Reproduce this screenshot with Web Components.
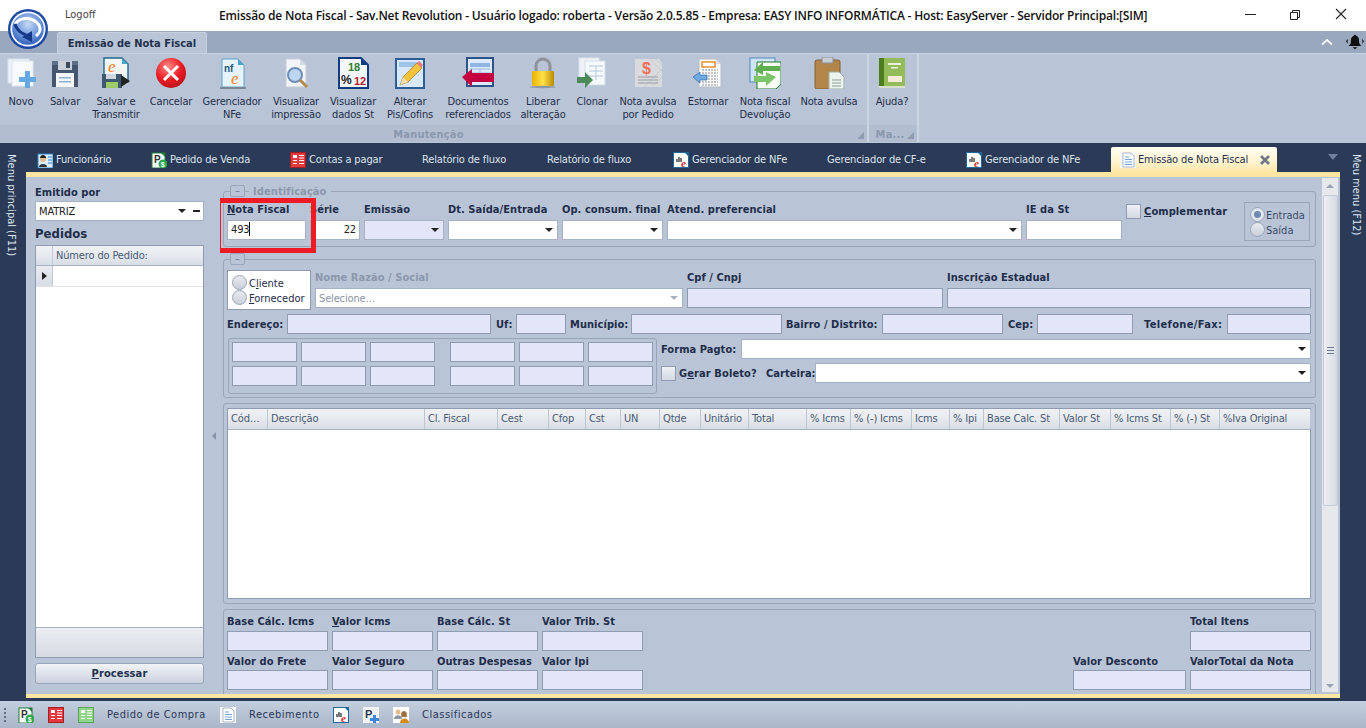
<!DOCTYPE html>
<html lang="pt"><head><meta charset="utf-8"><title>Sav.Net</title>
<style>
html,body{margin:0;padding:0;height:100%;overflow:hidden;background:#2a3a57}
body{font:11px "DejaVu Sans Condensed","DejaVu Sans",sans-serif;font-stretch:condensed;color:#1f2d4a;letter-spacing:-.15px}
</style></head><body>
<script>
const ICONS={
novo:`<rect x="3" y="2" width="21" height="24" fill="#eef2f8" stroke="#d5dde8"/><rect x="7" y="4" width="21" height="25" fill="#f8fafd" stroke="#dce4ee"/><path d="M20 14h5v6h6v5h-6v6h-5v-6h-6v-5h6z" fill="#63a9e4"/>`,
salvar:`<path d="M3 4h26v26H3z" fill="#46566f"/><path d="M3 4h26v4H3z" fill="#5e6e88"/><rect x="9" y="4" width="14" height="9" fill="#c9cfd8"/><rect x="17" y="5" width="4" height="6" fill="#3b4a60"/><rect x="7" y="16" width="18" height="14" fill="#f4f6fa"/><path d="M10 20h12v1.500H10zM10 24h12v1.500H10z" fill="#8fb2d6"/>`,
trans:`<path d="M4 1h18l6 6v18H4z" fill="#f4f6f6" stroke="#1e6a8a" stroke-width="1.400"/><path d="M22 1v6h6z" fill="#4aa6c8"/><text x="8" y="15" font-family="Liberation Serif,serif" font-style="italic" font-size="17" fill="#e8801e">e</text><rect x="2" y="17" width="20" height="14" fill="#3f5a70"/><rect x="6" y="17" width="10" height="5" fill="#cfd6de"/><rect x="6" y="25" width="12" height="6" fill="#9ecb6a"/><path d="M21 18l9 6-9 6z" fill="#222"/>`,
cancel:`<defs><radialGradient id="rd" cx=".4" cy=".3" r=".8"><stop offset="0" stop-color="#ff8a8a"/><stop offset=".55" stop-color="#ea1c24"/><stop offset="1" stop-color="#b01015"/></radialGradient></defs><circle cx="16" cy="16" r="15" fill="url(#rd)"/><path d="M9 9l14 14M23 9L9 23" stroke="#fff" stroke-width="3"/>`,
nfe:`<path d="M6 2h16l6 6v22H6z" fill="#e6f3fa" stroke="#5aa2c8"/><path d="M22 2v6h6z" fill="#4aa6c8"/><text x="8" y="15" font-family="Liberation Sans,sans-serif" font-weight="700" font-size="10" fill="#1d5a7a">nf</text><text x="15" y="27" font-family="Liberation Serif,serif" font-style="italic" font-size="17" fill="#ef8a1d">e</text><rect x="4" y="30" width="26" height="2" fill="#7d8792"/>`,
visual:`<path d="M6 2h14l6 6v22H6z" fill="#f2f4f8" stroke="#c5ccd8"/><path d="M20 2v6h6z" fill="#d5dbe5"/><circle cx="15" cy="18" r="7" fill="#bcd6f2" stroke="#6e8eb8" stroke-width="2"/><path d="M20 23l7 7" stroke="#b58a4a" stroke-width="3"/>`,
st:`<path d="M2 1h22l7 7v23H2z" fill="#f4f7fb" stroke="#123c80" stroke-width="2"/><path d="M24 1v7h7z" fill="#123c80"/><text x="11" y="14" font-family="Liberation Sans,sans-serif" font-weight="700" font-size="11" fill="#2f7d2f">18</text><text x="4" y="27" font-family="Liberation Sans,sans-serif" font-weight="700" font-size="12" fill="#222">%</text><text x="17" y="28" font-family="Liberation Sans,sans-serif" font-weight="700" font-size="11" fill="#b4242a">12</text>`,
alterar:`<rect x="2" y="2" width="28" height="29" fill="#d8e8f8" stroke="#2c5f96" stroke-width="2"/><rect x="5" y="5" width="22" height="5" fill="#9fc4ea"/><path d="M6 28l3-8L23 6l5 5-14 14z" fill="#f5c33c" stroke="#a9761c" stroke-width=".7"/><path d="M23 6l2-2 4 4-2 3z" fill="#e77"/><path d="M6 28l3-8 5 5z" fill="#f3dcae"/>`,
docs:`<rect x="5" y="1" width="26" height="28" fill="#dce9f8" stroke="#2c5288" stroke-width="2"/><rect x="8" y="6" width="20" height="4" fill="#8db4e2"/><path d="M8 12h20M8 16h20M8 20h20M18 12v10" stroke="#9ab8dc"/><path d="M0 20l10-8v4h22v9H10v5z" fill="#c4053f"/>`,
lock:`<path d="M9 15V9a7 7 0 0114 0v6" fill="none" stroke="#8f9299" stroke-width="3"/><defs><linearGradient id="gd" x1="0" x2="1"><stop offset="0" stop-color="#e7b400"/><stop offset=".5" stop-color="#ffe14a"/><stop offset="1" stop-color="#b98a00"/></linearGradient></defs><rect x="5" y="14" width="22" height="15" rx="1" fill="url(#gd)"/><ellipse cx="16" cy="30" rx="13" ry="1.200" fill="#8d97a6"/>`,
clone:`<rect x="3" y="1" width="20" height="23" fill="#eef2f7" stroke="#dbe2ec"/><rect x="9" y="4" width="20" height="24" fill="#f6f9fc" stroke="#d3dde9"/><path d="M13 9h14M13 14h14M13 19h14M20 9v14" stroke="#b6c7da"/><path d="M1 20h8v-5l8 8-8 8v-5H1z" fill="#4e8a57"/>`,
avulsa:`<path d="M3 2h24l3 4v24H3z" fill="#d8dade"/><path d="M18 2l12 12M24 2l6 6M12 30l18-18M20 30l10-10" stroke="#c9cbd0"/><text x="10" y="17" font-family="Liberation Sans,sans-serif" font-weight="700" font-size="16" fill="#f0705a">$</text><path d="M6 20h20M6 23h20M6 26h20" stroke="#9a9ca2"/>`,
estornar:`<path d="M7 2h17l5 5v23H7z" fill="#fafafa" stroke="#b8bdc6"/><path d="M24 2v5h5z" fill="#dde"/><rect x="10" y="5" width="13" height="5" fill="#fff" stroke="#e8892a" stroke-width="1.400"/><path d="M10 13h16M10 16h16M16 19h10M16 22h10M10 25h16M10 28h16" stroke="#8a8f98" stroke-dasharray="2 1"/><path d="M1 20l7-5v3h7v5H8v3z" fill="#6ea9e0" stroke="#2f6aa8" stroke-width=".7"/>`,
fiscal:`<rect x="1" y="1" width="25" height="24" fill="#cfe4f6" stroke="#4d8ac0"/><path d="M8 5h24v22l-5 5H8z" fill="#f6fbf4" stroke="#1f7d2d"/><path d="M5 13l9-8v4h17v5H14v4z" fill="#5fae50"/><path d="M27 20l-10 9v-4H5v-6h12v-4z" fill="#7cc56a"/>`,
clip:`<rect x="2" y="3" width="25" height="29" rx="2" fill="#b2854a" stroke="#856034"/><rect x="9" y="0" width="11" height="6" rx="1" fill="#c8ccd4" stroke="#8a8f98"/><path d="M16 15h10l5 5v12H16z" fill="#eef3ef" stroke="#9cb0a6"/><path d="M19 23h9M19 26h9M19 29h9" stroke="#8aa098"/>`,
help:`<rect x="3" y="1" width="26" height="28" rx="1" fill="#93bb5a"/><rect x="3" y="1" width="5" height="28" fill="#4e7d1d"/><rect x="12" y="6" width="13" height="2" fill="#e8f2d8"/><rect x="15" y="10" width="7" height="1.500" fill="#e8f2d8"/><rect x="12" y="19" width="14" height="6" fill="#f6ead8"/><rect x="3" y="29" width="26" height="2" fill="#d9dfcb"/>`,
func:`<rect x="1" y="2" width="15" height="14" fill="#dbeefb" stroke="#2c86c8"/><circle cx="6" cy="7" r="3" fill="#e7b98a"/><path d="M3 6c0-4 6-4 6 0z" fill="#222"/><path d="M2 15c0-4 8-4 8 0z" fill="#333"/><path d="M11 5h4M11 8h4M11 11h4" stroke="#2c86c8"/>`,
pv:`<rect x="1" y="1" width="13" height="15" fill="#fff" stroke="#1d7d36"/><path d="M10 1h4v4z" fill="#1d7d36"/><text x="3" y="11" font-family="Liberation Sans,sans-serif" font-weight="700" font-size="10" fill="#333">P</text><circle cx="12" cy="12" r="4.500" fill="#2aa84a"/><text x="9.800" y="15" font-family="Liberation Sans,sans-serif" font-weight="700" font-size="7" fill="#fff">$</text>`,
red:`<rect x=".5" y=".5" width="15" height="15" fill="#e23a3e" stroke="#a71d22"/><path d="M3 3h4v3H3zM3 8h4v1H3zM3 11h4v1H3z" fill="#fff"/><path d="M9 3.500h5M9 6h5M9 8.500h5M9 11.500h5" stroke="#fff"/>`,
green:`<rect x=".5" y=".5" width="15" height="15" fill="#90d68a" stroke="#5aa655"/><path d="M3 3h4v3H3zM3 8h4v1H3zM3 11h4v1H3z" fill="#fff"/><path d="M9 3.500h5M9 6h5M9 8.500h5M9 11.500h5" stroke="#fff"/>`,
sheet:`<rect x="0" y="0" width="16" height="16" fill="#f6f7f8"/><path d="M3 1h8l3 3v11H3z" fill="#fff" stroke="#aeb6c2"/><path d="M5 5h4M5 7.500h7M5 10h7M5 12.500h7" stroke="#6aa4d8"/>`,
nfs:`<rect x=".5" y=".5" width="15" height="15" fill="#fff" stroke="#1d6a9a"/><path d="M11 0h5v5z" fill="#1d6a9a"/><path d="M4 10V7M6 10V5M8 10V6" stroke="#333" stroke-width="1.300"/><text x="8" y="15" font-family="Liberation Serif,serif" font-style="italic" font-weight="700" font-size="11" fill="#d8281e">e</text>`,
pplus:`<rect x="0" y="0" width="16" height="16" fill="#f1f2f4"/><text x="2" y="11" font-family="Liberation Sans,sans-serif" font-weight="700" font-size="11" fill="#2a3a57">P</text><path d="M10 8h3v3h3v3h-3v2h-3v-2H7v-3h3z" fill="#3f86d8"/>`,
class:`<rect x="0" y="0" width="16" height="16" fill="#fff"/><circle cx="5" cy="5" r="2.500" fill="#e9b98a"/><path d="M1 12c0-5 8-5 8 0z" fill="#8b95a5"/><circle cx="11" cy="7" r="2.600" fill="#efc18f"/><path d="M8.200 7c0-4 5.600-4 5.600 0v3H8.200z" fill="#7a4b1e" opacity=".7"/><path d="M7 16c0-6 9-6 9 0z" fill="#d58b1e"/>`
};
const def=(n,html)=>{customElements.define(n,class extends HTMLElement{
 connectedCallback(){ if(this.shadowRoot) return; const r=this.attachShadow({mode:'open'}); r.innerHTML=typeof html==='function'?html(this):html; }
})};
def('x-icon',e=>{const s=e.getAttribute('size')||32,vb=e.getAttribute('vb')||s;return `<style>:host{display:block;width:${s}px;height:${s}px;flex:none}svg{display:block}</style><svg width="${s}" height="${s}" viewBox="0 0 ${vb} ${vb}">${ICONS[e.getAttribute('name')]||''}</svg>`});

def('x-logo',`<style>:host{position:absolute;left:8px;top:9px;width:40px;height:40px;z-index:3}</style>
<svg width="40" height="40" viewBox="0 0 40 40"><defs><radialGradient id="b" cx=".5" cy=".35" r=".7"><stop offset="0" stop-color="#c6daf6"/><stop offset=".55" stop-color="#6d96da"/><stop offset="1" stop-color="#2a58b4"/></radialGradient></defs><circle cx="20" cy="20" r="20" fill="#1d4aa0"/><circle cx="20" cy="20" r="17.600" fill="#eef4fc"/><circle cx="20" cy="20" r="15.800" fill="url(#b)"/><path d="M7 15c6-8 18-7 24 1 2 4 1 8-3 11" fill="none" stroke="#fff" stroke-width="3"/><path d="M7 15c2 7 9 12 17 12" fill="none" stroke="#17398a" stroke-width="3"/><path d="M14 28l10 5 0-11z" fill="#17398a"/></svg>`);

def('x-titlebar',`<style>:host{display:flex;align-items:center;height:31px;background:#fff;flex:none;position:relative;letter-spacing:0}
.log{position:absolute;left:65px;top:8px;font:11px "DejaVu Sans Condensed","DejaVu Sans",sans-serif;font-stretch:condensed;color:#444}
.t{margin-left:219px;font:600 12px "Open Sans",sans-serif;color:#111;white-space:nowrap;letter-spacing:-.187px;width:950px}
.w{margin-left:auto;display:flex}.w svg{display:block}
</style><span class="log">Logoff</span><span class="t">Emissão de Nota Fiscal - Sav.Net Revolution - Usuário logado: roberta - Versão 2.0.5.85 - Empresa: EASY INFO INFORMÁTICA - Host: EasyServer - Servidor Principal:[SIM]</span>
<div class="w"><svg width="136" height="31" viewBox="0 0 136 31" fill="none" stroke="#222"><path d="M15 14.500h11"/><path d="M60.500 12.500h7v7h-7zM62.500 12.500v-2h7v7h-2"/><path d="M106 9l10 10M116 9l-10 10" stroke-width="1.100"/></svg></div>`);

def('x-ribbon-tabs',`<style>:host{display:flex;height:22px;background:#9aa8bf;flex:none;position:relative}
.tab{margin:1px 0 0 57px;width:150px;height:21px;box-sizing:border-box;background:#b9c5d6;border:1px solid #c6d0de;border-bottom:0;border-radius:3px 3px 0 0;font-weight:700;font-size:11px;letter-spacing:0;line-height:21px;text-align:center;color:#23314e}
.r{margin-left:auto;display:flex;align-items:center;gap:13px;padding-right:2px}
</style><div class="tab">Emissão de Nota Fiscal</div>
<div class="r"><svg width="12" height="8" viewBox="0 0 12 8"><path d="M1 6.500l5-4.500 5 4.500" fill="none" stroke="#f4f6f9" stroke-width="2"/></svg>
<svg width="18" height="18" viewBox="0 0 22 18"><path d="M11 0c1 0 1.500.8 1.500 1.500C16 3 16 6 16 9c0 2 1.500 3.500 3 5H3c1.500-1.500 3-3 3-5 0-3 0-6 3.500-7.500C9.500.8 10 0 11 0z" fill="#111"/><path d="M8 15.500h6l-3 2.500zM2 5l-2 3 2 3M20 5l2 3-2 3" fill="#111"/></svg></div>`);

def('x-ribbon',`<style>:host{display:flex;height:90px;background:#b9c5d6;flex:none;border-top:1px solid #c8d2e0;box-sizing:border-box}
</style><slot></slot>`);
def('x-ribbon-group',e=>`<style>:host{display:flex;flex-direction:column;flex:none;width:${e.getAttribute('w')}px;height:88px;border-right:2px solid #cbd4e1;box-sizing:border-box}
.b{display:flex;height:71px}.l{height:17px;box-sizing:border-box;padding-right:${e.getAttribute('lp')||0}px;background:#b2bed0;color:#8b97ac;font-weight:700;font-size:11px;line-height:20px;text-align:center;position:relative;letter-spacing:.2px}
.l i{position:absolute;right:3px;bottom:3px;width:0;height:0;border-left:7px solid transparent;border-bottom:7px solid #8e9bb0}
</style><div class="b"><slot></slot></div><div class="l">${e.getAttribute('label')}<i></i></div>`);
def('x-ribbon-btn',e=>`<style>:host{display:flex;flex-direction:column;align-items:center;flex:none;width:${e.getAttribute('w')}px;padding-top:3px;box-sizing:border-box}
.t{margin-top:6px;text-align:center;line-height:13px;color:#1f2d4a;white-space:pre-line}
</style><x-icon name="${e.getAttribute('icon')}" size="32"></x-icon><div class="t"><slot></slot></div>`);

def('x-rail',e=>`<style>:host{display:flex;flex:none;width:26px;justify-content:center;padding:11px ${e.getAttribute('pr')||0}px 0 ${e.getAttribute('pl')||0}px;box-sizing:border-box;background:#2a3a57}
span{writing-mode:vertical-rl;color:#dfe5ef;font-size:11px;white-space:nowrap;letter-spacing:0}</style><span><slot></slot></span>`);

def('x-tabstrip',`<style>:host{display:flex;height:29px;box-sizing:border-box;padding:4px 0 0 11px;background:#2a3a57;gap:40px;position:relative;flex:none}
i{position:absolute;right:2px;top:11px;width:0;height:0;border:5px solid transparent;border-top:6px solid #71809a;border-bottom:0}</style><slot></slot><i></i>`);
def('x-tab',e=>{const ic=e.getAttribute('icon');return `<style>:host{display:flex;align-items:center;gap:3px;flex:none;height:25px;width:${e.getAttribute('w')}px;color:#dde3ed;white-space:nowrap}</style>${ic?`<x-icon name="${ic}" size="16" vb="16"></x-icon>`:''}<slot></slot>`});
def('x-tab-active',`<style>:host{display:flex;align-items:center;flex:none;width:166px;height:25px;margin:0 0 0 -9px;box-sizing:border-box;padding:0 6px 0 9px;gap:2px;background:linear-gradient(#fffdf4,#fff3cf 60%,#ffe6a4);border-radius:2px 2px 0 0;color:#23314e;white-space:nowrap}
svg{margin-left:auto}</style><x-icon name="sheet" size="16" vb="16"></x-icon><slot></slot><svg width="12" height="12" viewBox="0 0 12 12"><path d="M2 2l8 8M10 2l-8 8" stroke="#6e7888" stroke-width="2.600"/></svg>`);

def('x-panel',`<style>:host{display:flex;flex:1;min-height:0;background:#b9c5d6;border-top:5px solid #ffe5a2;border-bottom:4px solid #ffe5a2}</style><slot></slot>`);
def('x-side',`<style>:host{display:flex;flex-direction:column;flex:none;width:169px;margin-left:9px;padding-top:9px;box-sizing:border-box}
.e{font-weight:700;height:15px;line-height:14px;letter-spacing:.05px}
.h{font-weight:700;font-size:13px;height:24px;line-height:26px;margin-top:0;flex:none;letter-spacing:0}
</style><div class="e">Emitido por</div><x-combo w="169" h="20" white minus>MATRIZ</x-combo><div class="h">Pedidos</div><slot></slot>`);
def('x-pedidos',`<style>:host{display:flex;flex-direction:column;width:169px;height:413px;box-sizing:border-box;border:1px solid #8f9bb0;background:#fff;flex:none}
.hd{display:flex;box-sizing:border-box;height:20px;background:linear-gradient(#eff1f4,#e6e9ee 50%,#d8dde6);border-bottom:1px solid #a7b2c4;color:#4a5a75;line-height:19px}
.c{width:16px;border-right:1px solid #c2cad6}.n{padding-left:3px}
.row{display:flex;box-sizing:border-box;height:21px;border-bottom:1px solid #dfe3e9}
.ri{width:16px;background:linear-gradient(#e8ebef,#d8dde6);border-right:1px solid #c2cad6;position:relative}
.ri i{position:absolute;left:6px;top:6px;border:4px solid transparent;border-left:5px solid #222;border-right:0}
.sp{flex:1}.ft{height:30px;box-sizing:border-box;border-top:1px solid #a7b2c4;background:linear-gradient(#eceef2,#e0e3ea 50%,#d6dae3)}
</style><div class="hd"><div class="c"></div><div class="n">Número do Pedido:</div></div><div class="row"><div class="ri"><i></i></div></div><div class="sp"></div><div class="ft"></div>`);
def('x-button',`<style>:host{display:block;flex:none;width:169px;height:21px;margin-top:5px;box-sizing:border-box;border:1px solid #98a5ba;border-radius:3px;background:linear-gradient(#f1f3f6,#dde1e9 50%,#cbd2de);text-align:center;font-weight:700;line-height:19px;color:#23314e;letter-spacing:.1px}</style><slot></slot>`);
def('x-splitter',`<style>:host{display:flex;flex:none;width:16px;align-items:center;justify-content:center;padding-left:4px;box-sizing:border-box}i{width:0;height:0;border:4px solid transparent;border-right:4px solid #8793a8;border-left:0}</style><i></i>`);

def('x-main',`<style>:host{display:block;flex:none;width:1100px;overflow:hidden;box-sizing:border-box;padding:14px 0 0 3px;position:relative}</style><slot></slot>`);
def('x-group',e=>{const leg=e.getAttribute('legend');const col=e.hasAttribute('collapsible');return `<style>:host{display:block;position:relative;width:1093px;box-sizing:border-box;border:1px solid #98a5ba;border-radius:3px;padding:0 3px;height:${e.getAttribute('h')}px;margin-top:${e.getAttribute('mt')||0}px}
.b{position:absolute;left:6px;top:-7px;width:15px;height:12px;border:1px solid #98a5ba;border-radius:2px;background:#b9c5d6;box-sizing:border-box;color:#6c7a92;line-height:9px;text-align:center;font-size:11px}
.l{position:absolute;left:25px;top:-7px;background:#b9c5d6;padding:0 4px;font-weight:700;color:#8b97ac;line-height:13px;letter-spacing:.1px}</style>${col?'<div class="b">–</div>':''}${leg?`<div class="l">${leg}</div>`:''}<slot></slot>`});
def('x-row',e=>`<style>:host{display:flex;gap:${e.getAttribute('gap')??4}px;align-items:${e.getAttribute('ai')||'flex-start'};margin-top:${e.getAttribute('mt')||0}px;padding-right:${e.getAttribute('pr')||0}px}</style><slot></slot>`);

const BOX=`box-sizing:border-box;border:1px solid #8f9bb0;`;
def('x-input',e=>`<style>:host{display:block;flex:none;${BOX}width:${e.getAttribute('w')}px;height:${e.getAttribute('h')||20}px;background:${e.hasAttribute('white')?'#fff':'#e3e5f8'};line-height:18px;padding:0 3px;color:#222;text-align:${e.getAttribute('ta')||'left'};font-size:11px;border-color:${e.hasAttribute('white')?'#a5b1c4':'#8f9bb0'}}
b{display:inline-block;width:1px;height:14px;background:#111;vertical-align:-3px}</style><slot></slot>${e.hasAttribute('caret')?'<b></b>':''}`);
def('x-combo',e=>{const mute=e.hasAttribute('muted');return `<style>:host{display:flex;align-items:center;flex:none;${BOX}width:${e.getAttribute('w')}px;height:${e.getAttribute('h')||20}px;background:${e.hasAttribute('white')?'#fff':'#e3e5f8'};padding:0 3px;color:${mute?'#8a94a6':'#222'};border-color:#a5b1c4}
.a{margin-left:auto;width:0;height:0;border:4px solid transparent;border-top:4px solid ${mute?'#aab3c2':'#222'};border-bottom:0;margin-right:1px}
.m{width:7px;height:2px;background:#222;margin-left:6px}</style><slot></slot><i class="a"></i>${e.hasAttribute('minus')?'<i class="m"></i>':''}`});
def('x-field',e=>`<style>:host{display:block;flex:none;width:${e.getAttribute('w')}px}
.l{height:18px;line-height:${e.getAttribute('ll')||16}px;font-weight:700;white-space:nowrap;color:${e.hasAttribute('muted')?'#8b97ac':'#1f2d4a'};letter-spacing:.05px}</style><div class="l"><slot></slot></div>${
 e.getAttribute('kind')==='combo'?`<x-combo w="${e.getAttribute('w')}" ${e.hasAttribute('white')?'white':''} ${e.hasAttribute('muted')?'muted':''}>${e.getAttribute('value')||''}</x-combo>`:
 `<x-input w="${e.getAttribute('w')}" ${e.hasAttribute('white')?'white':''} ${e.hasAttribute('caret')?'caret':''} ta="${e.getAttribute('ta')||'left'}">${e.getAttribute('value')||''}</x-input>`}`);
def('x-inline',e=>`<style>:host{display:flex;align-items:center;flex:none;margin-left:${e.getAttribute('ml')||0}px}
.l{width:${e.getAttribute('lw')}px;font-weight:700;white-space:nowrap;letter-spacing:${e.getAttribute('ls')||'.05'}px}</style><div class="l"><slot></slot></div><x-input w="${e.getAttribute('w')}"></x-input>`);
def('x-check',`<style>:host{display:flex;align-items:center;gap:3px;flex:none;font-weight:700;white-space:nowrap;letter-spacing:.1px}
i{width:15px;height:15px;box-sizing:border-box;border:1px solid #8f9bb0;background:linear-gradient(#eef0f4,#d3d8e2)}</style><i></i><span><slot></slot></span>`);
def('x-radio',e=>`<style>:host{display:flex;align-items:center;gap:${e.getAttribute('gap')||1}px;height:15px;flex:none;white-space:nowrap;letter-spacing:0;color:${e.getAttribute('color')||'#1f2d4a'}}
span{padding-top:2px}
i{width:15px;height:15px;border-radius:50%;box-sizing:border-box;border:1px solid #98a5ba;background:${e.hasAttribute('on')?'radial-gradient(#7189ae 0 3px,#dfe3ea 4px)':'linear-gradient(#e8ebef,#c9cfda)'}}</style><i></i><span><slot></slot></span>`);
def('x-radio-box',e=>`<style>:host{display:flex;flex-direction:column;justify-content:center;flex:none;box-sizing:border-box;width:${e.getAttribute('w')}px;height:${e.getAttribute('h')}px;padding-left:${e.getAttribute('pl')||4}px;${e.hasAttribute('white')?'background:#fff;border:1px solid #8f9bb0;':'border:1px solid #98a5ba;'}}</style><slot></slot>`);
def('x-subbox',`<style>:host{display:grid;grid-template-columns:repeat(6,65px);align-content:start;column-gap:4px;row-gap:4px;flex:none;width:429px;height:56px;margin-left:1px;box-sizing:border-box;border:1px solid #98a5ba;border-radius:3px;padding:3px 3px 0 3px}</style><slot></slot>`);
def('x-datagrid',e=>{const cols=[['Cód…',41],['Descrição',157],['Cl. Fiscal',73],['Cest',51],['Cfop',37],['Cst',35],['UN',39],['Qtde',41],['Unitário',48],['Total',58],['% Icms',44],['% (-) Icms',61],['Icms',38],['% Ipi',34],['Base Calc. St',76],['Valor St',51],['% Icms St',60],['% (-) St',49],['%Iva Original',91]];
return `<style>:host{display:flex;flex-direction:column;width:1084px;height:191px;box-sizing:border-box;border:1px solid #8f9bb0;background:#fff;margin-top:4px}
.h{display:flex;box-sizing:border-box;height:21px;flex:none;background:linear-gradient(#eff1f4,#e6e9ee 50%,#d8dde6);border-bottom:1px solid #a7b2c4;color:#4a5a75}
.h div{box-sizing:border-box;border-right:1px solid #bcc5d2;padding-left:3px;line-height:19px;white-space:nowrap;overflow:hidden;flex:none}</style><div class="h">${cols.map(([t,w],i)=>`<div style="width:${w-(i?0:1)}px">${t}</div>`).join('')}</div>`});
def('x-scroll',`<style>:host{display:flex;flex-direction:column;align-items:center;flex:none;width:16px;margin:1px 0 0 2px;background:#e6e8ec;box-sizing:border-box;height:514px;position:relative}
.u,.d{width:0;height:0;border:4px solid transparent;flex:none}
.u{border-bottom:4px solid #98a2b2;border-top:0;margin:6px 0 7px}
.d{border-top:4px solid #98a2b2;border-bottom:0;margin-top:auto;margin-bottom:4px}
.t{width:15px;height:311px;box-sizing:border-box;border:1px solid #c2cad6;border-radius:2px;background:linear-gradient(90deg,#eef0f4,#d5dae3);display:flex;align-items:center;justify-content:center}
.t i{width:7px;height:5px;border-top:1px solid #6d7a90;border-bottom:1px solid #6d7a90;position:relative}
.t i::after{content:"";position:absolute;left:0;right:0;top:2px;height:1px;background:#6d7a90}
</style><div class="u"></div><div class="t"><i></i></div><div class="d"></div>`);
def('x-highlight',`<style>:host{position:absolute;left:-8px;top:6px;width:100px;height:55px;box-sizing:border-box;border:5px solid #ed1c24;z-index:5;pointer-events:none}</style>`);

def('x-status',`<style>:host{display:flex;align-items:center;height:27px;flex:none;margin-top:1px;background:linear-gradient(#c3cede,#aab6c9);padding-left:4px;position:relative;letter-spacing:.5px}
.g{width:2px;height:14px;margin:0 12px 0 0;background:repeating-linear-gradient(#5f6d85 0 2px,transparent 2px 4px)}
</style><div class="g"></div><slot></slot>`);
def('x-status-item',e=>{const i=e.getAttribute('icon');return `<style>:host{display:flex;align-items:center;flex:none;gap:0;width:${e.getAttribute('w')}px;color:#2a3756;white-space:nowrap}</style>${i?`<x-icon name="${i}" size="16" vb="16"></x-icon>`:''}<slot></slot>`});
def('x-app',`<style>:host{display:flex;flex-direction:column;width:1366px;height:728px;position:relative;overflow:hidden;background:#2a3a57}
.w{display:flex;flex:1;min-height:0}.c{display:flex;flex-direction:column;flex:1;min-width:0;padding-bottom:2px}</style>
<x-logo></x-logo><slot name="top"></slot><div class="w"><slot name="left"></slot><div class="c"><slot name="center"></slot></div><slot name="right"></slot></div><slot name="status"></slot>`);
</script>
<x-app>
 <x-titlebar slot="top"></x-titlebar>
 <x-ribbon-tabs slot="top"></x-ribbon-tabs>
 <x-ribbon slot="top">
  <x-ribbon-group w="869" lp="10" label="Manutenção">
   <x-ribbon-btn w="42" icon="novo">Novo</x-ribbon-btn>
   <x-ribbon-btn w="46" icon="salvar">Salvar</x-ribbon-btn>
   <x-ribbon-btn w="56" icon="trans">Salvar e
Transmitir</x-ribbon-btn>
   <x-ribbon-btn w="54" icon="cancel">Cancelar</x-ribbon-btn>
   <x-ribbon-btn w="68" icon="nfe">Gerenciador
NFe</x-ribbon-btn>
   <x-ribbon-btn w="60" icon="visual">Visualizar
impressão</x-ribbon-btn>
   <x-ribbon-btn w="54" icon="st">Visualizar
dados St</x-ribbon-btn>
   <x-ribbon-btn w="60" icon="alterar">Alterar
Pis/Cofins</x-ribbon-btn>
   <x-ribbon-btn w="76" icon="docs">Documentos
referenciados</x-ribbon-btn>
   <x-ribbon-btn w="54" icon="lock">Liberar
alteração</x-ribbon-btn>
   <x-ribbon-btn w="44" icon="clone">Clonar</x-ribbon-btn>
   <x-ribbon-btn w="68" icon="avulsa">Nota avulsa
por Pedido</x-ribbon-btn>
   <x-ribbon-btn w="52" icon="estornar">Estornar</x-ribbon-btn>
   <x-ribbon-btn w="62" icon="fiscal">Nota fiscal
Devolução</x-ribbon-btn>
   <x-ribbon-btn w="66" icon="clip">Nota avulsa</x-ribbon-btn>
  </x-ribbon-group>
  <x-ribbon-group w="50" lp="6" label="Ma...">
   <x-ribbon-btn w="46" icon="help">Ajuda?</x-ribbon-btn>
  </x-ribbon-group>
 </x-ribbon>
 <x-rail slot="left" pr="4">Menu principal (F11)</x-rail>
 <x-tabstrip slot="center">
  <x-tab w="74" icon="func">Funcionário</x-tab>
  <x-tab w="99" icon="pv">Pedido de Venda</x-tab>
  <x-tab w="92" icon="red">Contas a pagar</x-tab>
  <x-tab w="85">Relatório de fluxo</x-tab>
  <x-tab w="86">Relatório de fluxo</x-tab>
  <x-tab w="114" icon="nfs">Gerenciador de NFe</x-tab>
  <x-tab w="99">Gerenciador de CF-e</x-tab>
  <x-tab w="114" icon="nfs">Gerenciador de NFe</x-tab>
  <x-tab-active>Emissão de Nota Fiscal</x-tab-active>
 </x-tabstrip>
 <x-panel slot="center">
  <x-side><x-pedidos></x-pedidos><x-button><u>P</u>rocessar</x-button></x-side>
  <x-splitter></x-splitter>
  <x-main>
   <x-group h="56" legend="Identificação" collapsible>
    <x-highlight></x-highlight>
    <x-row mt="10">
     <x-field w="79" white caret value="493"><u>N</u>ota Fiscal</x-field>
     <x-field w="50" white ta="right" value="22">Série</x-field>
     <x-field w="80" kind="combo">Emissão</x-field>
     <x-field w="110" kind="combo" white>Dt. Saída/Entrada</x-field>
     <x-field w="101" kind="combo" white>Op. consum. final</x-field>
     <x-field w="355" kind="combo" white>Atend. preferencial</x-field>
     <x-field w="96" white>IE da St</x-field>
     <x-check style="margin-top:2px;width:114px"><u>C</u>omplementar</x-check>
     <x-radio-box w="66" h="39" pl="5"><x-radio on color="#3b4a66">Entrada</x-radio><x-radio color="#3b4a66">Saída</x-radio></x-radio-box>
    </x-row>
   </x-group>
   <x-group h="139" mt="12" collapsible>
    <x-row mt="10">
     <x-radio-box w="84" h="40" white pl="4"><x-radio gap="2">C<u>l</u>iente</x-radio><x-radio gap="2"><u>F</u>ornecedor</x-radio></x-radio-box>
     <x-field w="368" kind="combo" white muted value="Selecione…">Nome Razão / Social</x-field>
     <x-field w="256">Cpf / Cnpj</x-field>
     <x-field w="364">Inscrição Estadual</x-field>
    </x-row>
    <x-row mt="4" gap="0" ai="center">
     <x-inline lw="60" w="204">Endereço:</x-inline>
     <x-inline lw="20" w="50" ml="5">Uf:</x-inline>
     <x-inline lw="61" w="151" ml="4">Município:</x-inline>
     <x-inline lw="96" w="121" ml="4">Bairro / Distrito:</x-inline>
     <x-inline lw="29" w="96" ml="5">Cep:</x-inline>
     <x-inline lw="83" w="84" ml="11" ls=".35">Telefone/Fax:</x-inline>
    </x-row>
    <x-row mt="4" gap="4">
     <x-subbox>
      <x-input w="65"></x-input><x-input w="65"></x-input><x-input w="65"></x-input>
      <x-input w="65" style="margin-left:11px"></x-input><x-input w="65" style="margin-left:11px"></x-input><x-input w="65" style="margin-left:11px"></x-input>
      <x-input w="65"></x-input><x-input w="65"></x-input><x-input w="65"></x-input>
      <x-input w="65" style="margin-left:11px"></x-input><x-input w="65" style="margin-left:11px"></x-input><x-input w="65" style="margin-left:11px"></x-input>
     </x-subbox>
     <div style="flex:none;width:650px;padding-top:1px">
      <x-row gap="0" ai="center"><span style="font-weight:700;width:80px;letter-spacing:.05px">Forma Pagto:</span><x-combo w="570" white></x-combo></x-row>
      <x-row gap="0" ai="center" mt="4"><x-check style="width:105px">G<u>e</u>rar Boleto?</x-check><span style="font-weight:700;width:49px;letter-spacing:.05px">Carteira:</span><x-combo w="496" white></x-combo></x-row>
     </div>
    </x-row>
   </x-group>
   <x-group h="201" mt="5"><x-datagrid></x-datagrid></x-group>
   <x-group h="92" mt="5">
    <x-row mt="3" pr="1">
     <x-field w="101" ll="18">Base Cálc. Icms</x-field>
     <x-field w="101" ll="18"><u>V</u>alor Icms</x-field>
     <x-field w="101" ll="18">Base Cálc. St</x-field>
     <x-field w="101" ll="18">Valor Trib. St</x-field>
     <div style="flex:1"></div>
     <x-field w="121" ll="18">Total Itens</x-field>
    </x-row>
    <x-row mt="1" pr="1">
     <x-field w="101" ll="20">Valor do Frete</x-field>
     <x-field w="101" ll="20">Valor Seguro</x-field>
     <x-field w="101" ll="20">Outras Despesas</x-field>
     <x-field w="101" ll="20">Valor Ipi</x-field>
     <div style="flex:1"></div>
     <x-field w="113" ll="20">Valor Desconto</x-field>
     <x-field w="121" ll="20">ValorTotal da Nota</x-field>
    </x-row>
   </x-group>
  </x-main>
  <x-scroll></x-scroll>
 </x-panel>
 <x-rail slot="right" pl="6">Meu menu (F12)</x-rail>
 <x-status slot="status">
  <x-status-item w="30" icon="pv"></x-status-item>
  <x-status-item w="30" icon="red"></x-status-item>
  <x-status-item w="29" icon="green"></x-status-item>
  <x-status-item w="113">Pedido de Compra</x-status-item>
  <x-status-item w="29" icon="sheet"></x-status-item>
  <x-status-item w="84">Recebimento</x-status-item>
  <x-status-item w="30" icon="nfs"></x-status-item>
  <x-status-item w="30" icon="pplus"></x-status-item>
  <x-status-item w="29" icon="class"></x-status-item>
  <x-status-item w="90">Classificados</x-status-item>
 </x-status>
</x-app>
</body></html>
